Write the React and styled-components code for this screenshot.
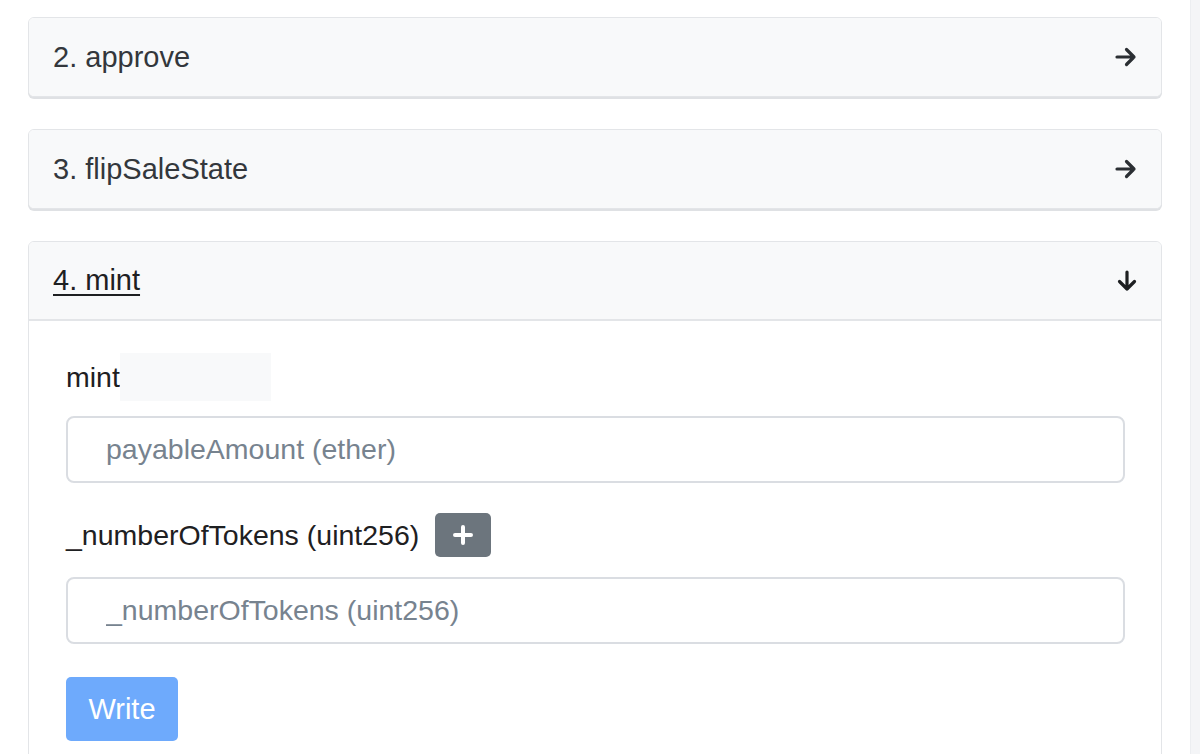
import React from "react";
import styled, { createGlobalStyle } from "styled-components";

const GlobalStyle = createGlobalStyle`
  html, body {
    margin: 0;
    padding: 0;
    background: #ffffff;
    font-family: "Liberation Sans", Arial, Helvetica, sans-serif;
  }
  * { box-sizing: border-box; }
`;

const Page = styled.div`
  display: flex;
  height: 754px;
  overflow: hidden;
`;

const Main = styled.div`
  flex: 1;
  display: flex;
  flex-direction: column;
  gap: 32px;
  padding: 17px 28px 0 28px;
`;

const Gutter = styled.div`
  width: 10px;
  background: #f4f5f7;
  border-left: 1px solid #eceef1;
`;

const Card = styled.div`
  border: 1px solid #e3e5e8;
  border-radius: 6px;
  background: #ffffff;
  box-shadow: ${({ $open }) => ($open ? "none" : "0 2px 0 #dfe1e4")};
  overflow: hidden;
  flex-shrink: 0;
`;

const Header = styled.div`
  display: flex;
  align-items: center;
  justify-content: space-between;
  height: ${({ $open }) => ($open ? "79px" : "78px")};
  padding: 0 24px;
  background: #f8f9fa;
  border-bottom: ${({ $open }) => ($open ? "2px solid #e3e5e8" : "none")};
`;

const Title = styled.span`
  font-size: 29px;
  color: ${({ $open }) => ($open ? "#1e2022" : "#33373c")};
  text-decoration: ${({ $open }) => ($open ? "underline" : "none")};
  text-underline-offset: 4px;
  text-decoration-thickness: 2px;
`;

const Body = styled.div`
  padding: 32px 36px 20px 37px;
  display: flex;
  flex-direction: column;
`;

const LabelRow = styled.div`
  display: flex;
  align-items: center;
  gap: 16px;
  height: ${({ $h }) => $h}px;
  margin-bottom: ${({ $mb }) => $mb}px;
  font-size: 28.5px;
  color: #1e2022;
`;

const Label = styled.span`
  display: flex;
  align-items: center;
  height: 100%;
`;

const Shade = styled.span`
  display: inline-block;
  width: 151px;
  height: 48px;
  background: #f8f9fa;
`;

const AddButton = styled.button`
  width: 56px;
  height: 44px;
  border: none;
  border-radius: 5px;
  background: #6c757d;
  display: flex;
  align-items: center;
  justify-content: center;
  padding: 0;
`;

const Field = styled.input`
  height: 67px;
  width: 100%;
  border: 2px solid #dadde2;
  border-radius: 8px;
  padding: 0 0 0 38px;
  font-family: "Liberation Sans", Arial, Helvetica, sans-serif;
  font-size: 28.5px;
  color: #1e2022;
  background: #ffffff;
  margin-bottom: ${({ $mb }) => $mb}px;
  outline: none;
  &::placeholder {
    color: #77838f;
  }
`;

const WriteButton = styled.button`
  width: 112px;
  height: 64px;
  border: none;
  border-radius: 5px;
  background: #6eaafc;
  color: #ffffff;
  font-family: "Liberation Sans", Arial, Helvetica, sans-serif;
  font-size: 29px;
  padding: 0;
`;

const ArrowRight = () => (
  <svg width="22" height="20" viewBox="0 0 22 20" fill="none">
    <path d="M2 10H19M11.5 2.5L19 10L11.5 17.5" stroke="#2b2f33" strokeWidth="3.2" strokeLinecap="round" strokeLinejoin="round" />
  </svg>
);

const ArrowDown = () => (
  <svg width="20" height="22" viewBox="0 0 20 22" fill="none">
    <path d="M10 2V19M2.5 11.5L10 19L17.5 11.5" stroke="#1e2022" strokeWidth="3.2" strokeLinecap="round" strokeLinejoin="round" />
  </svg>
);

const Plus = () => (
  <svg width="20" height="20" viewBox="0 0 20 20">
    <path d="M10 2V18M2 10H18" stroke="#ffffff" strokeWidth="4" strokeLinecap="round" />
  </svg>
);

const functions = [
  { id: 2, name: "approve" },
  { id: 3, name: "flipSaleState" },
];

export default function App() {
  return (
    <Page>
      <GlobalStyle />
      <Main>
        {functions.map((fn) => (
          <Card key={fn.id}>
            <Header>
              <Title>{fn.id}. {fn.name}</Title>
              <ArrowRight />
            </Header>
          </Card>
        ))}
        <Card $open>
          <Header $open>
            <Title $open>4. mint</Title>
            <ArrowDown />
          </Header>
          <Body>
            <LabelRow $h={48} $mb={15}>
              <Label>
                mint
                <Shade />
              </Label>
            </LabelRow>
            <Field placeholder="payableAmount (ether)" $mb={30} />
            <LabelRow $h={44} $mb={20}>
              <Label>_numberOfTokens (uint256)</Label>
              <AddButton>
                <Plus />
              </AddButton>
            </LabelRow>
            <Field placeholder="_numberOfTokens (uint256)" $mb={33} />
            <div>
              <WriteButton>Write</WriteButton>
            </div>
          </Body>
        </Card>
      </Main>
      <Gutter />
    </Page>
  );
}
